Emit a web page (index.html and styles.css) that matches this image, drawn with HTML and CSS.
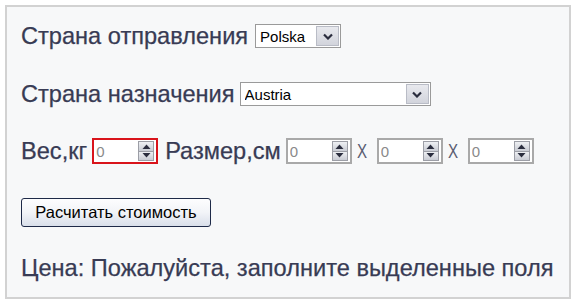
FILE: index.html
```html
<!DOCTYPE html>
<html lang="ru">
<head>
<meta charset="utf-8">
<title>Расчёт стоимости</title>
<link rel="stylesheet" href="styles.css">
</head>
<body>
<div class="box">
  <div class="row r1">
    <span class="label">Страна отправления</span>
    <span class="sel sel-from">
      <select><option>Polska</option></select>
      <span class="drop"><svg width="10" height="7" viewBox="0 0 10 7"><path d="M1 1.5 L5 5.5 L9 1.5" fill="none" stroke="#2a2d3e" stroke-width="2.2"/></svg></span>
    </span>
  </div>
  <div class="row r2">
    <span class="label">Страна назначения</span>
    <span class="sel sel-to">
      <select><option>Austria</option></select>
      <span class="drop"><svg width="10" height="7" viewBox="0 0 10 7"><path d="M1 1.5 L5 5.5 L9 1.5" fill="none" stroke="#2a2d3e" stroke-width="2.2"/></svg></span>
    </span>
  </div>
  <div class="row r3">
    <span class="label">Вес,кг</span>
    <span class="num invalid">
      <input type="text" value="0">
      <span class="spin"><span class="half up"><svg width="9" height="5" viewBox="0 0 9 5"><path d="M0.5 5 L4.5 0.5 L8.5 5 Z" fill="#2a2d3e"/></svg></span><span class="half down"><svg width="9" height="5" viewBox="0 0 9 5"><path d="M0.5 0 L4.5 4.5 L8.5 0 Z" fill="#2a2d3e"/></svg></span></span>
    </span>
    <span class="label l-size">Размер,см</span>
    <span class="num">
      <input type="text" value="0">
      <span class="spin"><span class="half up"><svg width="9" height="5" viewBox="0 0 9 5"><path d="M0.5 5 L4.5 0.5 L8.5 5 Z" fill="#2a2d3e"/></svg></span><span class="half down"><svg width="9" height="5" viewBox="0 0 9 5"><path d="M0.5 0 L4.5 4.5 L8.5 0 Z" fill="#2a2d3e"/></svg></span></span>
    </span>
    <span class="x">X</span>
    <span class="num">
      <input type="text" value="0">
      <span class="spin"><span class="half up"><svg width="9" height="5" viewBox="0 0 9 5"><path d="M0.5 5 L4.5 0.5 L8.5 5 Z" fill="#2a2d3e"/></svg></span><span class="half down"><svg width="9" height="5" viewBox="0 0 9 5"><path d="M0.5 0 L4.5 4.5 L8.5 0 Z" fill="#2a2d3e"/></svg></span></span>
    </span>
    <span class="x">X</span>
    <span class="num">
      <input type="text" value="0">
      <span class="spin"><span class="half up"><svg width="9" height="5" viewBox="0 0 9 5"><path d="M0.5 5 L4.5 0.5 L8.5 5 Z" fill="#2a2d3e"/></svg></span><span class="half down"><svg width="9" height="5" viewBox="0 0 9 5"><path d="M0.5 0 L4.5 4.5 L8.5 0 Z" fill="#2a2d3e"/></svg></span></span>
    </span>
  </div>
  <div class="row r4">
    <button type="button" class="calc">Расчитать стоимость</button>
  </div>
  <div class="row r5">
    <span class="label">Цена: Пожалуйста, заполните выделенные поля</span>
  </div>
</div>
</body>
</html>
```

FILE: styles.css
```css
html, body {
  margin: 0;
  padding: 0;
  background: #ffffff;
}

.box {
  margin: 5px;
  width: 548px;
  height: 290px;
  border: 2px solid #d2d2d2;
  background: #f7f8f9;
  padding: 0 0 0 14px;
  box-sizing: content-box;
  display: flex;
  flex-direction: column;
  font-family: "Liberation Sans", Arial, sans-serif;
  color: #383b54;
}

.row {
  display: flex;
  align-items: center;
}

.label {
  font-size: 23.6px;
  line-height: 26px;
  white-space: nowrap;
  -webkit-text-stroke: 0.25px #383b54;
}

.r1 { margin-top: 17px; height: 24px; }
.r2 { margin-top: 34px; height: 24px; }
.r3 { margin-top: 32px; height: 26px; }
.r4 { margin-top: 34px; height: 29px; }
.r5 { margin-top: 28px; height: 26px; }

/* selects */
.sel {
  display: inline-flex;
  height: 24px;
  box-sizing: border-box;
  border: 1px solid #9a9a9a;
  background: #ffffff;
  padding: 1px;
  margin-left: 7px;
}
.sel-from { width: 86px; }
.sel-to { width: 191px; margin-left: 5px; }

.sel select {
  appearance: none;
  -webkit-appearance: none;
  border: 0;
  outline: none;
  background: transparent;
  flex: 1;
  min-width: 0;
  font-family: "Liberation Sans", Arial, sans-serif;
  font-size: 15px;
  color: #000;
  padding: 0 0 0 3px;
  margin: 0;
  height: 20px;
}

.drop {
  width: 23px;
  height: 20px;
  box-sizing: border-box;
  border: 1px solid #b9bcc6;
  background: linear-gradient(#e8e9ee, #d2d4dc);
  display: flex;
  align-items: center;
  justify-content: center;
}

/* number inputs */
.num {
  display: inline-flex;
  align-items: center;
  width: 66px;
  height: 26px;
  box-sizing: border-box;
  border: 2px solid #a9a9a9;
  background: #ffffff;
  padding: 0 2px 0 0;
  margin-left: 5px;
}
.num.invalid {
  border-color: #d9141b;
  margin-left: 5px;
}

.num input {
  border: 0;
  outline: none;
  background: transparent;
  width: 40px;
  min-width: 0;
  flex: 1;
  font-family: "Liberation Sans", Arial, sans-serif;
  font-size: 15px;
  color: #8a8a8a;
  padding: 0 0 0 2px;
  margin: 0;
  height: 20px;
}

.spin {
  display: flex;
  flex-direction: column;
  width: 16px;
  height: 20px;
  box-sizing: border-box;
  border: 1px solid #9c9ea6;
  background: #d6d8df;
}
.half {
  flex: 1;
  display: flex;
  align-items: center;
  justify-content: center;
  background: linear-gradient(#eef0f3, #c9ccd4);
}
.half.up { border-bottom: 1px solid #9c9ea6; }

.l-size { margin-left: 7px; }

.x {
  display: inline-block;
  font-size: 21px;
  color: #5a5d72;
  margin-left: 3px;
  margin-right: 3px;
  transform: scaleX(0.72);
}

/* button */
.calc {
  width: 190px;
  height: 29px;
  box-sizing: border-box;
  border: 1px solid #1e2a48;
  border-radius: 3px;
  background: linear-gradient(#fdfdfe 0%, #f2f4f8 50%, #d9dfea 100%);
  font-family: "Liberation Sans", Arial, sans-serif;
  font-size: 16.5px;
  color: #000;
  padding: 0;
  margin: 0;
}
```
